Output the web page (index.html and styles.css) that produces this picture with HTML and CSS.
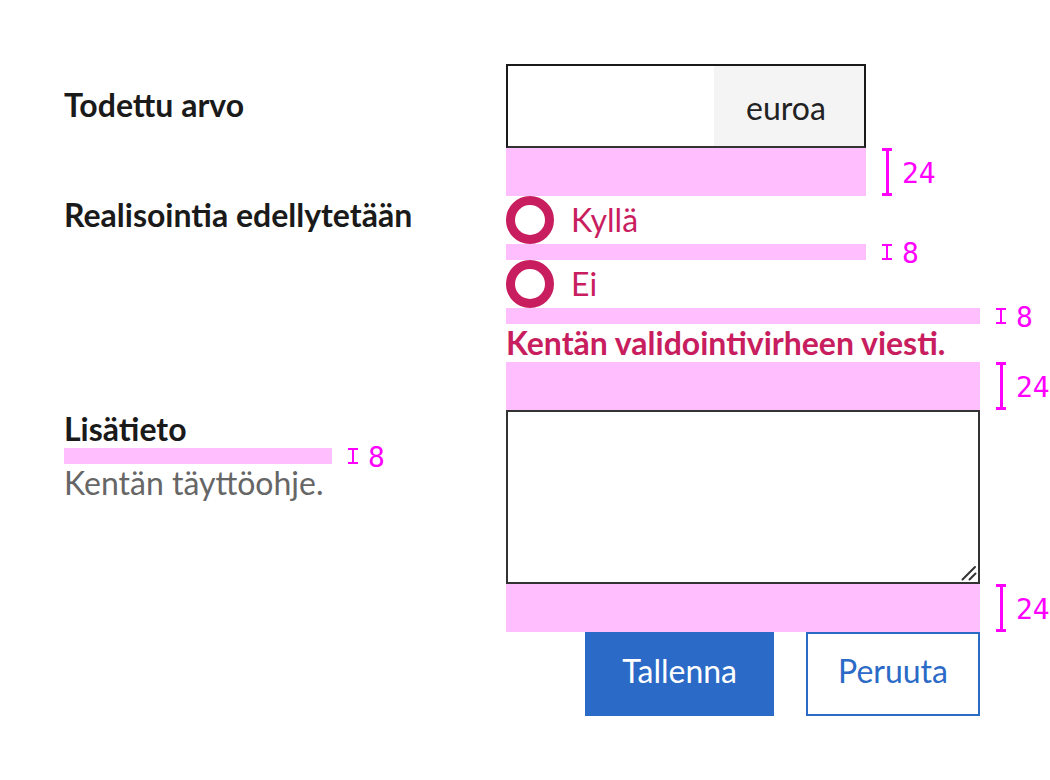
FILE: index.html
```html
<!DOCTYPE html>
<html lang="fi">
<head>
    <meta charset="UTF-8">
    <meta name="viewport" content="width=device-width, initial-scale=1.0">
    <title>Lomake - välistykset</title>
    <link rel="stylesheet" href="styles.css">
</head>
<body>
    <form class="form">
        <!-- Todettu arvo -->
        <div class="row">
            <div class="label label-mid">Todettu arvo</div>
            <div class="field">
                <div class="text-input narrow">
                    <input type="text" aria-label="Todettu arvo">
                    <span class="suffix">euroa</span>
                </div>
                <div class="gap gap-24 narrow"><span class="note"><i class="bracket"></i><span class="note-num">24</span></span></div>
            </div>
        </div>

        <!-- Realisointia edellytetään -->
        <div class="row">
            <div class="label">Realisointia edellytetään</div>
            <div class="field">
                <label class="radio narrow"><span class="radio-dot"></span>Kyllä</label>
                <div class="gap gap-8 narrow"><span class="note"><i class="bracket"></i><span class="note-num">8</span></span></div>
                <label class="radio narrow"><span class="radio-dot"></span>Ei</label>
                <div class="gap gap-8"><span class="note"><i class="bracket"></i><span class="note-num">8</span></span></div>
                <div class="error">Kentän validointivirheen viesti.</div>
                <div class="gap gap-24"><span class="note"><i class="bracket"></i><span class="note-num">24</span></span></div>
            </div>
        </div>

        <!-- Lisätieto -->
        <div class="row">
            <div class="label">
                Lisätieto
                <div class="gap gap-8 label-gap"><span class="note"><i class="bracket"></i><span class="note-num">8</span></span></div>
                <div class="hint">Kentän täyttöohje.</div>
            </div>
            <div class="field">
                <div class="textarea-wrap">
                    <textarea class="textarea" aria-label="Lisätieto"></textarea>
                    <svg class="grabber" width="16" height="16" viewBox="0 0 16 16">
                        <path d="M1.5 14.5 L14 2 M8.5 14.5 L14.5 8.5" stroke="#333" stroke-width="2" stroke-linecap="round" fill="none"/>
                    </svg>
                </div>
                <div class="gap gap-24"><span class="note"><i class="bracket"></i><span class="note-num">24</span></span></div>
            </div>
        </div>

        <!-- Painikkeet -->
        <div class="row">
            <div></div>
            <div class="actions">
                <button type="button" class="btn btn-primary">Tallenna</button>
                <button type="button" class="btn btn-secondary">Peruuta</button>
            </div>
        </div>
    </form>
</body>
</html>
```

FILE: styles.css
```css
/* Perustyylit */
body {
    margin: 0;
    padding: 64px;
    background-color: #fff;
    font-family: Lato, "Noto Sans", sans-serif;
    font-size: 32px;
    line-height: 38px;
    color: #1a1a1a;
}

.row {
    display: grid;
    grid-template-columns: 442px 474px;
}

.label {
    font-weight: bold;
}

.label-mid {
    padding-top: 22px;
}

.field {
    display: flex;
    flex-direction: column;
}

.narrow {
    width: 360px;
}

/* Tekstikenttä ja yksikkö */
.text-input {
    display: flex;
    height: 84px;
    box-sizing: border-box;
    border: 2px solid #1a1a1a;
    border-bottom-color: #333;
}

.text-input input {
    flex: 1;
    min-width: 0;
    border: none;
    outline: none;
    padding: 0 16px;
    font: inherit;
}

.suffix {
    width: 150px;
    display: flex;
    align-items: center;
    justify-content: center;
    padding-top: 4px;
    padding-right: 6px;
    box-sizing: border-box;
    background-color: #f4f4f4;
    color: #222;
}

/* Välistysmerkinnät */
.gap {
    position: relative;
    background-color: #ffbfff;
}

.gap-24 {
    height: 48px;
}

.gap-8 {
    height: 16px;
}

.label-gap {
    width: 268px;
}

.note {
    position: absolute;
    top: 0;
    left: calc(100% + 16px);
    height: 100%;
    display: flex;
    align-items: center;
    gap: 10px;
    font-family: "DejaVu Sans Mono", monospace;
    font-size: 28px;
    font-weight: normal;
    line-height: 1;
    color: #ff00ff;
}

.note-num {
    margin-top: 4px;
}

.bracket {
    position: relative;
    width: 10px;
    height: 100%;
    box-sizing: border-box;
    border-top: 2px solid #ff00ff;
    border-bottom: 2px solid #ff00ff;
}

.bracket::before {
    content: "";
    position: absolute;
    top: 0;
    bottom: 0;
    left: 4px;
    width: 2px;
    background-color: #ff00ff;
}

.gap-24 .bracket {
    border-width: 3px;
}

.gap-24 .bracket::before {
    width: 3px;
}

/* Valintanapit */
.radio {
    display: flex;
    align-items: center;
    gap: 17px;
    height: 48px;
    color: #c81d5e;
}

.radio-dot {
    width: 48px;
    height: 48px;
    box-sizing: border-box;
    border: 9px solid #c81d5e;
    border-radius: 50%;
}

.error {
    font-weight: bold;
    color: #c81d5e;
}

.hint {
    font-weight: normal;
    color: #666;
}

.textarea-wrap {
    position: relative;
}

.textarea {
    display: block;
    width: 100%;
    height: 174px;
    box-sizing: border-box;
    margin: 0;
    border: 2px solid #333;
    border-radius: 0;
    resize: none;
    font: inherit;
}

.grabber {
    position: absolute;
    right: 3px;
    bottom: 3px;
}

/* Painikkeet */
.actions {
    display: flex;
    justify-content: flex-end;
    gap: 32px;
}

.btn {
    height: 84px;
    padding: 0 35px 8px;
    border: 2px solid #2b6ac6;
    border-radius: 0;
    font-family: Lato, "Noto Sans", sans-serif;
    font-size: 32px;
    cursor: pointer;
}

.btn-primary {
    background-color: #2b6ac6;
    color: #fff;
}

.btn-secondary {
    padding-left: 30px;
    padding-right: 30px;
    background-color: #fff;
    color: #2b6ac6;
}
```
